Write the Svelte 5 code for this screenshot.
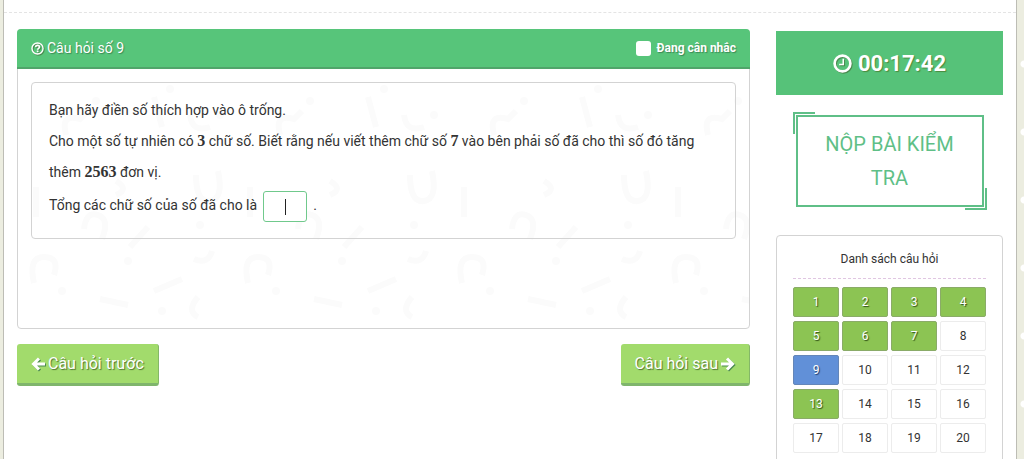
<script lang="ts">
  type Question = { id: number; status: 'done' | 'current' | 'open' };

  const answered = [1, 2, 3, 4, 5, 6, 7, 13];
  let current = $state(9);
  let considering = $state(false);
  let answer = $state('');

  const questions: Question[] = $derived(
    Array.from({ length: 20 }, (_, i) => {
      const id = i + 1;
      return {
        id,
        status: id === current ? 'current' : answered.includes(id) ? 'done' : 'open'
      };
    })
  );
</script>

<div class="page">
  <div class="topline"></div>

  <div class="layout">
    <main>
      <section class="panel">
        <header class="panel-head">
          <h1>
            <svg class="icon" viewBox="0 0 16 16" width="13" height="13" aria-hidden="true">
              <circle cx="8" cy="8" r="6.8" fill="none" stroke="#fff" stroke-width="1.7" />
              <path d="M5.6 6.3C5.8 4.9 6.8 4.2 8 4.2c1.4 0 2.5.8 2.5 2.1 0 1.5-2.3 1.6-2.3 3.2" fill="none" stroke="#fff" stroke-width="2" />
              <rect x="7.1" y="10.5" width="2.1" height="2" fill="#fff" />
            </svg>
            Câu hỏi số {current}
          </h1>
          <label class="consider">
            <input type="checkbox" bind:checked={considering} />
            Đang cân nhắc
          </label>
        </header>

        <div class="panel-body">
          <!-- faint pattern behind the question -->
          <svg class="pattern" aria-hidden="true">
            <defs>
              <pattern id="marks" width="214" height="260" patternUnits="userSpaceOnUse">
                <g fill="none" stroke="#fbfbfb" stroke-width="6">
                  <path d="M136 28l8 30M172 46q2 18 20 12M48 66q-6-22 14-16l8-8" />
                  <path d="M178 106q0 28 14 26t8-30M18 118v30M98 112q14 8 0 14" />
                  <path d="M130 158l-18 20M66 160q2-18 14-14t4 24" />
                  <path d="M16 214q-6-26 10-26t10 18" />
                  <path d="M82 230l28 6M136 222l28-12M180 228q-12 14 0 20M176 190q14 6 18-8" />
                </g>
                <g fill="#fbfbfb">
                  <circle cx="152" cy="20" r="4" />
                  <circle cx="78" cy="32" r="4" />
                  <circle cx="202" cy="46" r="4" />
                  <circle cx="182" cy="156" r="4" />
                  <circle cx="110" cy="192" r="4" />
                  <circle cx="44" cy="222" r="4" />
                  <circle cx="144" cy="242" r="4" />
                </g>
              </pattern>
            </defs>
            <rect width="100%" height="100%" fill="url(#marks)" />
          </svg>

          <div class="question">
            <p>Bạn hãy điền số thích hợp vào ô trống.</p>
            <p>
              Cho một số tự nhiên có <b>3</b> chữ số. Biết rằng nếu viết thêm chữ số <b>7</b> vào bên phải số đã cho thì số đó tăng<br />
              thêm <b>2563</b> đơn vị.
            </p>
            <p class="answer-row">
              <label for="answer">Tổng các chữ số của số đã cho là</label>
              <input id="answer" class:empty={answer === ''} type="text" autocomplete="off" bind:value={answer} />
              <span>.</span>
            </p>
          </div>
        </div>
      </section>

      <nav class="pager">
        <button type="button" onclick={() => (current = Math.max(1, current - 1))}>
          <svg class="icon" viewBox="0 0 14 14" width="14" height="14" aria-hidden="true">
            <path d="M8 1.5L2.500 7 8 12.500M3 7h11" fill="none" stroke="#fff" stroke-width="3" />
          </svg>
          Câu hỏi trước
        </button>
        <button type="button" onclick={() => (current = Math.min(20, current + 1))}>
          Câu hỏi sau
          <svg class="icon" viewBox="0 0 14 14" width="14" height="14" aria-hidden="true">
            <path d="M6 1.500L11.500 7 6 12.500M11 7H0" fill="none" stroke="#fff" stroke-width="3" />
          </svg>
        </button>
      </nav>
    </main>

    <aside>
      <div class="timer">
        <svg class="icon" viewBox="0 0 20 20" width="19" height="19" aria-hidden="true">
          <circle cx="10" cy="10" r="8.3" fill="none" stroke="#fff" stroke-width="2.8" />
          <path d="M10.800 5v6H6.500" fill="none" stroke="#fff" stroke-width="1.600" />
        </svg>
        <span>00:17:42</span>
      </div>

      <button class="submit" type="button">NỘP BÀI KIỂM TRA</button>

      <section class="list">
        <h2>Danh sách câu hỏi</h2>
        <div class="numbers">
          {#each questions as q (q.id)}
            <button type="button" class={q.status} onclick={() => (current = q.id)}>{q.id}</button>
          {/each}
        </div>
      </section>
    </aside>
  </div>
</div>

<style>
  :global(body) {
    background: radial-gradient(circle at 100% 50%, #fff 3px, transparent 4px) right 30px / 8px 68px repeat-y #ecede0;
  }

  * {
    box-sizing: border-box;
  }

  .page {
    min-height: 100vh;
    margin: 0 7px 0 3px;
    border-left: 1px solid #bdbdb5;
    border-right: 1px solid #bdbdb5;
    background: #fff;
    font-family: Roboto, 'Liberation Sans', sans-serif;
    color: #333;
  }

  button,
  input {
    font-family: inherit;
  }

  h1,
  h2,
  p {
    margin: 0;
    font-weight: 400;
  }

  .topline {
    height: 13px;
    border-bottom: 1px dashed #e4e4e4;
  }

  .layout {
    display: grid;
    grid-template-columns: minmax(0, 1fr) 227px;
    gap: 26px;
    padding: 16px 13px 0;
  }

  .panel {
    display: flex;
    flex-direction: column;
    min-height: 300px;
    border: 1px solid #d3d3d3;
    border-radius: 4px;
  }

  .panel-head {
    display: flex;
    align-items: center;
    justify-content: space-between;
    height: 40px;
    margin: -1px -1px 0;
    padding: 0 14px;
    border-bottom: 2px solid #50a56a;
    border-radius: 4px 4px 0 0;
    background: #57c57a;
    color: #fff;
    text-shadow: 1px 1px 1px #3d8a56;
  }

  .panel-head h1 {
    display: flex;
    align-items: center;
    gap: 3px;
    font-size: 14px;
  }

  .icon {
    flex: none;
    filter: drop-shadow(1px 1px 0 #4a8a4f);
  }

  .consider {
    display: flex;
    align-items: center;
    gap: 6px;
    font-size: 12px;
    font-weight: 700;
  }

  .consider input {
    appearance: none;
    width: 15px;
    height: 15px;
    margin: 0;
    border-radius: 3px;
    background: #fff;
  }

  .consider input:checked {
    background: #2f7d4a;
    border: 4px solid #fff;
  }

  .panel-body {
    position: relative;
    flex: 1;
    padding: 13px;
  }

  .pattern {
    position: absolute;
    inset: 0;
    width: 100%;
    height: 100%;
  }

  .question {
    position: relative;
    padding: 12px 17px 16px;
    border: 1px solid #d3d3d3;
    border-radius: 4px;
    font-size: 14px;
    line-height: 31px;
  }

  .question b {
    font-family: 'Liberation Serif', serif;
    font-size: 16px;
    line-height: 16px;
  }

  .answer-row {
    display: flex;
    gap: 6px;
    padding-top: 3px;
    line-height: 28px;
  }

  .answer-row input {
    width: 44px;
    height: 31px;
    padding: 0 6px;
    border: 1px solid #70c98c;
    border-radius: 3px;
    background: #fff;
    font-size: 14px;
    text-align: center;
    outline: none;
  }

  .answer-row input.empty {
    background: linear-gradient(#222, #222) center / 1px 16px no-repeat #fff;
    caret-color: transparent;
  }

  .pager {
    display: flex;
    justify-content: space-between;
    padding-top: 15px;
  }

  .pager button {
    display: flex;
    align-items: center;
    gap: 3px;
    height: 42px;
    padding: 0 14px;
    border: 0;
    border-right: 1px solid #84b867;
    border-bottom: 3px solid #7fb56c;
    border-radius: 3px;
    background: #a2db6c;
    color: #fff;
    font-size: 16px;
    text-shadow: 1px 1px 1px #4d7330;
  }

  .timer {
    display: flex;
    align-items: center;
    justify-content: center;
    gap: 6px;
    height: 64px;
    margin-top: 2px;
    background: #56c279;
    color: #fff;
    font-size: 22px;
    font-weight: 700;
    text-shadow: 1px 1px 1px #4b8a3c;
  }

  .submit {
    position: relative;
    display: block;
    width: 188px;
    margin: 20px auto 28px;
    padding: 10px 24px;
    border: 2px solid #5fbf87;
    background: #fff;
    color: #5fbf87;
    font-size: 20px;
    line-height: 34px;
  }

  .submit::before,
  .submit::after {
    content: '';
    position: absolute;
    width: 20px;
    height: 20px;
  }

  .submit::before {
    top: -5px;
    left: -5px;
    border-top: 2px solid #5fbf87;
    border-left: 2px solid #5fbf87;
  }

  .submit::after {
    right: -5px;
    bottom: -5px;
    border-right: 2px solid #5fbf87;
    border-bottom: 2px solid #5fbf87;
  }

  .list {
    padding: 3px 16px 16px;
    border: 1px solid #d3d3d3;
    border-radius: 4px;
  }

  .list h2 {
    height: 40px;
    border-bottom: 1px dashed #e0c6e2;
    font-size: 12px;
    line-height: 40px;
    text-align: center;
  }

  .numbers {
    display: grid;
    grid-template-columns: repeat(4, 1fr);
    gap: 4px 3px;
    padding-top: 8px;
  }

  .numbers button {
    height: 30px;
    padding: 0;
    border: 1px solid #ececec;
    border-radius: 2px;
    background: #fff;
    color: #333;
    font-size: 12px;
  }

  .numbers .done {
    border-color: #8aab68;
    background: #8cc453;
    color: #fff;
    text-shadow: 1px 1px 1px #2f4f14;
  }

  .numbers .current {
    border-color: #6486b8;
    background: #6190d8;
    color: #fff;
    text-shadow: 1px 1px 1px #1e3a66;
  }
</style>
